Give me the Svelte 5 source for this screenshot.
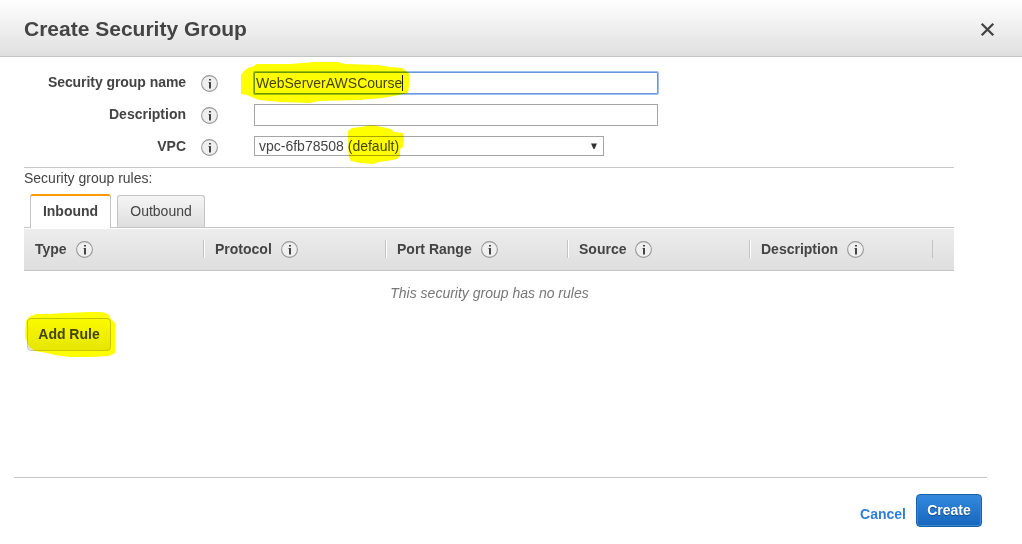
<script>
  const columns = [
    { label: 'Type', width: 180 },
    { label: 'Protocol', width: 182 },
    { label: 'Port Range', width: 182 },
    { label: 'Source', width: 182 },
    { label: 'Description', width: 183 }
  ];
  let name = 'WebServerAWSCourse';
</script>

{#snippet info()}
  <svg class="info" width="17" height="17" viewBox="0 0 17 17" aria-label="Info">
    <circle cx="8.5" cy="8.5" r="7.9" fill="#efefef" stroke="#999" stroke-width="1.1" />
    <path d="M8 4h2v1.6H8zM8 7h2v6.5H8z" fill="#444" />
    <path d="M7 7h1v1H7z" fill="#aaa" />
  </svg>
{/snippet}

<div class="dialog">
  <header>
    <h1>Create Security Group</h1>
    <svg width="15" height="15" viewBox="0 0 15 15" aria-label="Close">
      <path d="M1.7 1.7 13.3 13.3M13.3 1.7 1.7 13.3" stroke="#444" stroke-width="2.3" />
    </svg>
  </header>

  <section class="form">
    <div class="row">
      <span class="label first">Security group name</span>
      {@render info()}
      <div class="field focused">{name}<i class="caret"></i></div>
    </div>
    <div class="row">
      <span class="label">Description</span>
      {@render info()}
      <div class="field"></div>
    </div>
    <div class="row">
      <span class="label">VPC</span>
      {@render info()}
      <div class="field select">
        <span>vpc-6fb78508 (default)</span>
        <svg width="8" height="7" viewBox="0 0 8 7"><path d="M1 .5h6L4.5 6h-1z" fill="#333" /></svg>
      </div>
    </div>
  </section>

  <section class="rules">
    <p class="caption">Security group rules:</p>
    <nav>
      <span class="tab active">Inbound</span>
      <span class="tab">Outbound</span>
    </nav>
    <div class="thead">
      {#each columns as col}
        <div class="th" style="width: {col.width}px"><span>{col.label}</span>{@render info()}</div>
      {/each}
    </div>
    <p class="empty">This security group has no rules</p>
    <button class="add">Add Rule</button>
  </section>

  <footer>
    <span class="cancel">Cancel</span>
    <button class="create">Create</button>
  </footer>

  <svg class="marker" width="1022" height="544" viewBox="0 0 1022 544" aria-hidden="true">
    <path d="M241 75 244 71 248 68 254 66 257 64 290 64 315 62 338 62 345 64 378 65 390 67 402 68 406 71 409 73 410 79 409 86 408 93 394 96 382 98 360 100 320 101 309 103 280 102 259 100 254 98 247 95 241 94Z" />
    <path d="M348 131 352 128 361 127 371 125 382 127 391 129 394 132 403 133 404 140 403 147 400 149 400 156 397 159 387 161 379 162 373 164 360 163 351 161 349 157 348 149Z" />
    <path d="M26 321 29 317 36 314 50 314 65 313 90 312 102 312 108 314 111 319 115 323 115 353 109 356 90 357 69 357 55 355 47 353 35 351 29 347 27 342 25 336Z" />
  </svg>
</div>

<style>
  :global(body) { margin: 0; background: #fff; }
  .dialog {
    position: relative;
    width: 1022px;
    height: 544px;
    display: flex;
    flex-direction: column;
    overflow: hidden;
    background: #fff;
    color: #444;
    font: 14px/18px "Liberation Sans", Arial, sans-serif;
  }
  header {
    display: flex;
    justify-content: space-between;
    align-items: center;
    box-sizing: border-box;
    height: 57px;
    padding: 2px 27px 0 24px;
    border-bottom: 1px solid #c4c4c4;
    background: linear-gradient(#fff, #dfdfdf);
  }
  h1 { margin: 0; font-size: 21px; line-height: 26px; }
  svg { display: block; flex: none; }
  .form {
    display: flex;
    flex-direction: column;
    box-sizing: border-box;
    height: 110px;
    padding-top: 10px;
  }
  .row { display: flex; align-items: center; height: 32px; }
  .label { width: 186px; text-align: right; font-weight: bold; margin-top: -2px; }
  .first { letter-spacing: -0.06px; }
  .row .info { margin: 1px 36px 0 15px; }
  .field {
    display: flex;
    align-items: center;
    box-sizing: border-box;
    width: 404px;
    height: 22px;
    padding: 0 1px;
    border: 1px solid #a5a5a5;
    background: #fff;
  }
  .focused { border-color: #6c96dc; box-shadow: 0 0 0 1px #9fc0f5; border-radius: 1px; }
  .caret { width: 1px; height: 16px; background: #222; }
  .select {
    justify-content: space-between;
    width: 350px;
    height: 20px;
    margin-top: -2px;
    padding: 0 5px 0 4px;
  }
  .rules {
    display: flex;
    flex-direction: column;
    align-items: flex-start;
    width: 930px;
    margin-left: 24px;
    border-top: 1px solid #c8c8c8;
  }
  .caption { margin: 1px 0 7px; }
  nav {
    display: flex;
    align-items: flex-end;
    gap: 6px;
    box-sizing: border-box;
    width: 930px;
    height: 34px;
    padding-left: 6px;
    border-bottom: 1px solid #c4c4c4;
  }
  .tab {
    box-sizing: border-box;
    height: 32px;
    width: 88px;
    border: 1px solid #c4c4c4;
    border-bottom: 0;
    border-radius: 3px 3px 0 0;
    background: linear-gradient(#f5f5f5, #dedede);
    line-height: 31px;
    text-align: center;
  }
  .active {
    width: 81px;
    height: 34px;
    margin-bottom: -1px;
    border-top: 2px solid #f90;
    background: #fff;
    font-weight: bold;
    line-height: 31px;
  }
  .thead {
    display: flex;
    align-items: center;
    box-sizing: border-box;
    width: 930px;
    height: 42px;
    margin-top: 1px;
    padding-bottom: 1px;
    border-bottom: 1px solid #c4c4c4;
    background: linear-gradient(#ededed, #dedede);
  }
  .th {
    display: flex;
    align-items: center;
    gap: 9px;
    box-sizing: border-box;
    height: 18px;
    padding-left: 11px;
    border-right: 1px solid #c4c4c4;
    box-shadow: 1px 0 #fff;
    font-weight: bold;
  }
  .th span { margin-top: -1px; }
  .th:last-child { box-shadow: none; }
  .empty { width: 931px; margin: 13px 0 16px; color: #777; font-style: italic; text-align: center; }
  button {
    box-sizing: border-box;
    height: 33px;
    padding: 0;
    border: 1px solid #c4c4c4;
    border-radius: 4px;
    font: bold 14px/30px "Liberation Sans", Arial, sans-serif;
  }
  .add { width: 84px; margin-left: 3px; padding-bottom: 1px; background: linear-gradient(#fafafa, #e6e6e6); color: #444; }
  footer {
    display: flex;
    align-items: flex-start;
    justify-content: flex-end;
    gap: 10px;
    box-sizing: border-box;
    width: 973px;
    height: 67px;
    margin: auto 0 0 14px;
    padding: 16px 5px 0 0;
    border-top: 1px solid #c4c4c4;
  }
  .cancel { margin-top: 11px; color: #2e7fdb; font-weight: bold; }
  .create {
    width: 66px;
    padding-bottom: 2px;
    border-color: #1660ad;
    background: linear-gradient(#328adf, #1766bd);
    box-shadow: inset 0 0 0 1px #3c87d4;
    color: #fff;
    text-shadow: 0 1px 1px #104a8a;
  }
  .marker { position: absolute; inset: 0; mix-blend-mode: multiply; fill: #ff0; pointer-events: none; }
</style>
